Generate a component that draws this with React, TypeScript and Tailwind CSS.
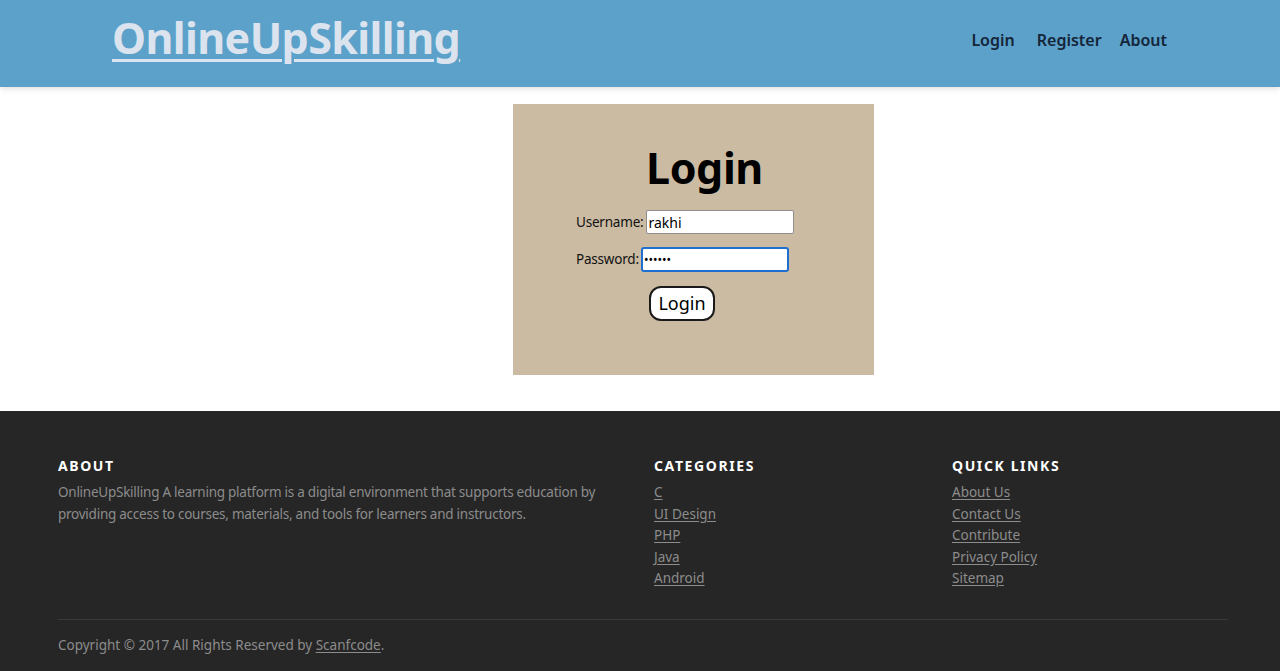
import { useState } from 'react';

const font = { fontFamily: '"Noto Sans", "Open Sans", sans-serif' };

function Header() {
  return (
    <header className="h-[87px] bg-[#5ba1c9] shadow-[0_2px_6px_rgba(0,0,0,0.12)] flex items-center justify-between pl-[112px] pr-[113px]">
      <a href="#" className="text-[43px] font-bold text-[#dbe3ee] underline decoration-[3px] underline-offset-[5px] leading-none -mt-[12px] tracking-[-0.6px]">
        OnlineUpSkilling
      </a>
      <nav className="flex items-center text-[16px] font-semibold text-[#15253a] -mt-[7px]">
        <a href="#" className="ml-[2px]">Login</a>
        <a href="#" className="ml-[22px]">Register</a>
        <a href="#" className="ml-[18px]">About</a>
      </nav>
    </header>
  );
}

function LoginCard() {
  const [username, setUsername] = useState('rakhi');
  const [password, setPassword] = useState('rakhi1');

  return (
    <div className="pt-[17px] pb-[36px]">
      <div className="ml-[513px] w-[361px] h-[271px] bg-[#cbbba3] flex flex-col items-start">
        <h1 className="ml-[133px] text-[43px] font-bold text-black leading-none mt-[42px] tracking-[-0.4px]">Login</h1>
        <form className="flex flex-col items-start text-[13.5px] text-[#111] ml-[63px] mt-[21px]">
          <div className="flex items-center gap-[2px] h-[24px]">
            <label className="tracking-[-0.2px]">Username:</label>
            <input
              value={username}
              onChange={e => setUsername(e.target.value)}
              className="w-[148px] h-[24px] bg-white border border-[#8f8f8f] rounded-[2px] px-[2px] text-[14px] text-black outline-none"
            />
          </div>
          <div className="flex items-center gap-[2px] h-[25px] mt-[13px]">
            <label className="tracking-[-0.2px]">Password:</label>
            <input
              type="password"
              value={password}
              onChange={e => setPassword(e.target.value)}
              className="w-[148px] h-[25px] bg-white border-2 border-[#1f6fd1] rounded-[3px] px-[1px] text-[12px] text-black outline-none"
            />
          </div>
          <button
            type="button"
            className="mt-[14px] ml-[73px] w-[66px] h-[35px] bg-white border-2 border-[#1a1a1a] rounded-[12px] text-[18px] text-black"
          >
            Login
          </button>
        </form>
      </div>
    </div>
  );
}

function Footer() {
  const categories = ['C', 'UI Design', 'PHP', 'Java', 'Android'];
  const links = ['About Us', 'Contact Us', 'Contribute', 'Privacy Policy', 'Sitemap'];
  const heading = 'text-white font-bold text-[14px] tracking-[1.6px] uppercase leading-[20px] mb-[6px]';

  return (
    <footer className="bg-[#262626] pl-[58px] pr-[52px] pt-[45px] pb-[17px] text-[14px]">
      <div className="flex">
        <div className="w-[596px]">
          <h6 className={heading}>About</h6>
          <p className="text-[#8c8c8c] leading-[21.6px] text-[13.5px] tracking-[-0.25px] max-w-[560px]">
            OnlineUpSkilling A learning platform is a digital environment that supports education by providing access to courses, materials, and tools for learners and instructors.
          </p>
        </div>
        <div className="w-[298px]">
          <h6 className={heading}>Categories</h6>
          <ul className="text-[13.5px] leading-[21.6px]">
            {categories.map(c => (
              <li key={c}><a href="#" className="text-[#8c8c8c] underline underline-offset-2">{c}</a></li>
            ))}
          </ul>
        </div>
        <div className="flex-1">
          <h6 className={heading}>Quick Links</h6>
          <ul className="text-[13.5px] leading-[21.6px]">
            {links.map(l => (
              <li key={l}><a href="#" className="text-[#8c8c8c] underline underline-offset-2">{l}</a></li>
            ))}
          </ul>
        </div>
      </div>
      <hr className="mt-[29px] border-t border-[#3a3a3a]" />
      <p className="mt-[15px] text-[#8c8c8c] text-[13.5px] leading-[20px]">
        Copyright &copy; 2017 All Rights Reserved by <a href="#" className="underline underline-offset-2">Scanfcode</a>.
      </p>
    </footer>
  );
}

export default function App() {
  return (
    <div className="min-h-[671px] bg-white" style={font}>
      <Header />
      <LoginCard />
      <Footer />
    </div>
  );
}
